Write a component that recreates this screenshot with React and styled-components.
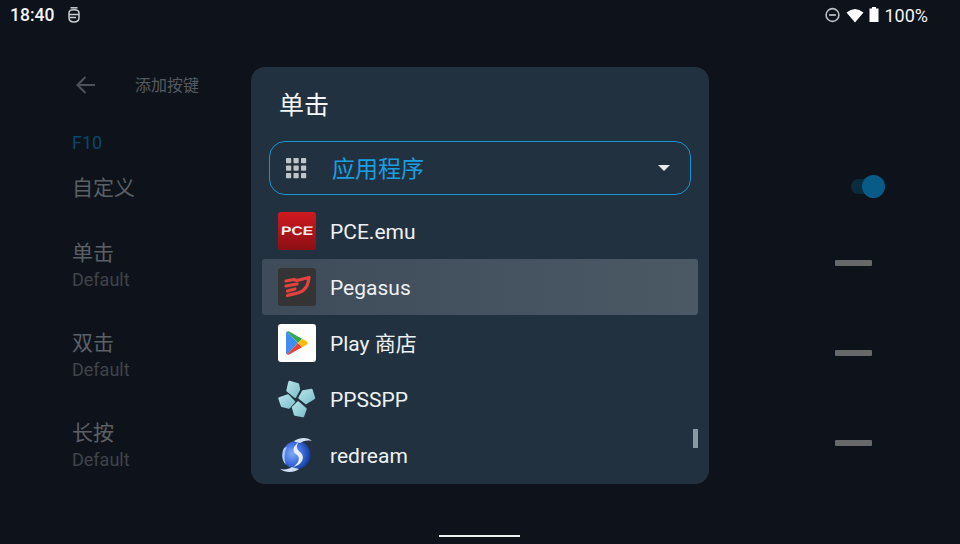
import React from "react";
import styled, { createGlobalStyle } from "styled-components";

const GlobalStyle = createGlobalStyle`
  html, body {
    margin: 0;
    padding: 0;
    background: #0e131b;
  }
  * {
    box-sizing: border-box;
  }
`;

const Screen = styled.div`
  position: relative;
  width: 960px;
  height: 544px;
  overflow: hidden;
  background: #0e131b;
  font-family: Roboto, "Noto Sans CJK SC", sans-serif;
`;

const StatusBar = styled.div`
  height: 30px;
  padding: 0 32px 0 10px;
  display: flex;
  align-items: center;
  color: #f2f4f6;
`;

const Clock = styled.span`
  font-size: 17.5px;
  font-weight: 500;
  width: 58px;
`;

const StatusRight = styled.div`
  margin-left: auto;
  display: flex;
  align-items: center;
  gap: 5px;
`;

const Percent = styled.span`
  font-size: 18px;
`;

const Settings = styled.div`
  padding: 0 75px 0 72px;
`;

const Toolbar = styled.div`
  height: 50px;
  margin-top: 30px;
  padding-left: 3px;
  display: flex;
  align-items: center;
  gap: 40px;
  color: #555a60;
  font-size: 16px;
`;

const ToolbarTitle = styled.span`
  margin-top: -2px;
`;

const Category = styled.div`
  color: #07486b;
  font-size: 18px;
  line-height: 20px;
  margin-top: 23px;
`;

const Row = styled.div`
  height: ${(p) => p.$height}px;
  display: flex;
  align-items: center;
  justify-content: space-between;
`;

const RowText = styled.div`
  display: flex;
  flex-direction: column;
  margin-top: -7px;
`;

const RowTitle = styled.div`
  color: #5b6066;
  font-size: 21px;
  line-height: 28px;
`;

const RowSub = styled.div`
  color: #3f4349;
  font-size: 18px;
  line-height: 20px;
  margin-top: 3px;
`;

const Toggle = styled.div`
  position: relative;
  width: 34px;
  height: 23px;
  margin-top: -4px;
`;

const ToggleTrack = styled.div`
  position: absolute;
  left: 0;
  top: 4px;
  width: 28px;
  height: 15px;
  border-radius: 8px;
  background: #0b2c3e;
`;

const ToggleThumb = styled.div`
  position: absolute;
  right: 0;
  top: 0;
  width: 23px;
  height: 23px;
  border-radius: 50%;
  background: #075b86;
`;

const Dash = styled.div`
  width: 37px;
  height: 6px;
  margin-right: 13px;
  margin-top: -10px;
  background: #676869;
  border-radius: 1px;
`;

const Dialog = styled.div`
  position: absolute;
  left: 251px;
  top: 67px;
  width: 458px;
  height: 417px;
  border-radius: 14px;
  background: #22313f;
  overflow: hidden;
  padding: 0 11px;
`;

const DialogTitle = styled.div`
  color: #f4f6f8;
  font-size: 25px;
  line-height: 36px;
  padding: 21px 0 0 17px;
  height: 74px;
`;

const Select = styled.div`
  height: 54px;
  margin: 0 7px;
  border: 1.5px solid #1a94d0;
  border-radius: 16px;
  display: flex;
  align-items: center;
  padding: 0 20px 0 15px;
  gap: 25px;
  color: #1a9fe0;
  font-size: 23px;
`;

const SelectLabel = styled.span`
  margin-top: -2px;
`;

const Caret = styled.div`
  margin-left: auto;
  width: 0;
  height: 0;
  border-left: 6px solid transparent;
  border-right: 6px solid transparent;
  border-top: 6px solid #e8ebee;
`;

const AppList = styled.div`
  margin-top: 8px;
  position: relative;
`;

const AppRow = styled.div`
  height: 56px;
  padding-left: 16px;
  display: flex;
  align-items: center;
  gap: 14px;
  color: #eef1f3;
  font-size: 21px;
  border-radius: 3px;
  background: ${(p) =>
    p.$selected ? "linear-gradient(90deg, #3e4c5a, #4b5965)" : "transparent"};
`;

const AppName = styled.span`
  line-height: 24px;
  margin-top: 1px;
`;

const Tile = styled.div`
  width: 38px;
  height: 38px;
  flex: none;
  border-radius: 3px;
  display: flex;
  align-items: center;
  justify-content: center;
  background: ${(p) => p.$bg};
`;

const PceMark = styled.span`
  color: #f6eeee;
  font-family: "Liberation Sans", sans-serif;
  font-size: 12.5px;
  font-weight: 700;
  font-style: italic;
  transform: scaleX(1.25) skewX(8deg);
  margin-top: -1px;
`;

const ScrollThumb = styled.div`
  position: absolute;
  right: 0;
  top: 226px;
  width: 5px;
  height: 19px;
  background: #8a98a3;
`;

const NavHandle = styled.div`
  position: absolute;
  left: 439px;
  bottom: 7px;
  width: 81px;
  height: 2px;
  background: #eceef0;
`;

const DataSaverIcon = () => (
  <svg width="17" height="16" viewBox="0 0 16 16">
    <circle cx="8" cy="8" r="6.4" fill="none" stroke="#b9bdc2" strokeWidth="1.6" />
    <rect x="4.6" y="7.1" width="6.8" height="1.8" fill="#b9bdc2" />
  </svg>
);

const WifiIcon = () => (
  <svg width="18" height="15" viewBox="0 0 18 15">
    <path d="M0.5 4.6 Q9 -2.6 17.5 4.6 L9 14.5 Z" fill="#fff" />
  </svg>
);

const BatteryIcon = () => (
  <svg width="10" height="16" viewBox="0 0 10 16">
    <path d="M3 0 H7 V1.5 H9.5 V15 H0.5 V1.5 H3 Z" fill="#fff" />
  </svg>
);

const NotifyIcon = () => (
  <svg width="12" height="16" viewBox="0 0 12 16" fill="none" stroke="#c9ced3" strokeWidth="1.5">
    <path d="M2.5 0.8 H9.5" />
    <path d="M1 6 C1 3.4 3 2.8 6 2.8 C9 2.8 11 3.4 11 6 V10.5 C11 13.6 9 15 6 15 C3 15 1 13.6 1 10.5 Z" />
    <path d="M1 7.4 H11 M1.5 10.6 H8" />
  </svg>
);

const BackArrow = () => (
  <svg width="20" height="20" viewBox="0 0 20 20" fill="none" stroke="#4e535a" strokeWidth="2">
    <path d="M20 10 H3 M10.5 2 L2.5 10 L10.5 18" />
  </svg>
);

const GridIcon = () => (
  <svg width="22" height="22" viewBox="0 0 22 22" fill="#bfc4c8">
    {[1, 8.5, 16].map((y) =>
      [1, 8.5, 16].map((x) => <rect key={`${x}-${y}`} x={x} y={y} width="5.2" height="5.2" rx="0.8" />)
    )}
  </svg>
);

const PegasusIcon = () => (
  <svg width="38" height="38" viewBox="0 0 38 38" fill="none" stroke="#e5413f" strokeWidth="3.2" strokeLinecap="round" strokeLinejoin="round">
    <path d="M8 13 L16 11.5 L19 12.5 C23 11.5 27 10.5 31 9.5 C30.5 15 28.5 20 25 22.5 C21 25.5 15 26 9.5 27.5" />
    <path d="M8 18 L19 16" />
    <path d="M9.5 23 L17 21" />
  </svg>
);

const PlayIcon = () => (
  <svg width="24" height="26" viewBox="0 0 24 26">
    <path d="M2 1.5 L13 13 L2 24.5 C1.2 24 1 23.4 1 22.5 V3.5 C1 2.6 1.2 2 2 1.5 Z" fill="#3f8df3" />
    <path d="M2 1.5 C2.6 1.1 3.4 1.1 4.2 1.6 L17 8.8 L13 13 Z" fill="#35a853" />
    <path d="M2 24.5 C2.6 24.9 3.4 24.9 4.2 24.4 L17 17.2 L13 13 Z" fill="#ea4335" />
    <path d="M17 8.8 L21.8 11.5 C23.2 12.3 23.2 13.7 21.8 14.5 L17 17.2 L13 13 Z" fill="#fbbc04" />
  </svg>
);

const PpssppIcon = () => (
  <svg width="38" height="38" viewBox="0 0 38 38">
    <defs>
      <linearGradient id="psp" x1="0" y1="0" x2="1" y2="1">
        <stop offset="0" stopColor="#b4e2e8" />
        <stop offset="1" stopColor="#7fc0cc" />
      </linearGradient>
    </defs>
    <g fill="url(#psp)" stroke="url(#psp)" strokeWidth="2.4" strokeLinejoin="round">
      <path d="M11.5 2 L20 4.5 L21 9.5 L17.2 16.8 L9.5 10.5 Z" />
      <path d="M33.5 10 L36 18 L28 23 L21.5 17.8 L25 11.5 Z" />
      <path d="M20 22.5 L27.5 29 L25 36 L17 34.5 L15 27.5 Z" />
      <path d="M1.5 18.5 L10 15.5 L16 21.8 L11 27.5 L4 25.8 Z" />
    </g>
  </svg>
);

const RedreamIcon = () => (
  <svg width="38" height="38" viewBox="0 0 38 38">
    <defs>
      <radialGradient id="rd" cx="0.35" cy="0.45" r="0.65">
        <stop offset="0" stopColor="#7fa9f5" />
        <stop offset="0.55" stopColor="#3f6fe0" />
        <stop offset="1" stopColor="#123a9e" />
      </radialGradient>
    </defs>
    <circle cx="18.5" cy="19" r="14" fill="url(#rd)" />
    <path d="M16 5 C22 1 30 1 34 5 C29 4 25 5 22 7 C19 6.5 17.5 6 16 5 Z" fill="#cfe0f4" />
    <path d="M2 33 C7 34 11 33 14 31 C17 32 19 32.5 21 33 C16 37 7 37 2 33 Z" fill="#cfe0f4" />
    <path d="M21 6 C14 11 14 16 19 19 C23 22 20 28 15 31 C24 29 28 21 22 16 C18 13 18 9 21 6 Z" fill="#e4eefc" />
    <path d="M6 12 C3 18 4 25 8 29 C6 23 6 17 9 11 Z" fill="#a9c8f8" />
  </svg>
);

const apps = [
  { name: "PCE.emu", bg: "linear-gradient(180deg, #cf1a20, #8c0f13)", icon: <PceMark>PCE</PceMark> },
  { name: "Pegasus", bg: "#343434", icon: <PegasusIcon />, selected: true },
  { name: "Play 商店", bg: "#ffffff", icon: <PlayIcon /> },
  { name: "PPSSPP", bg: "transparent", icon: <PpssppIcon /> },
  { name: "redream", bg: "transparent", icon: <RedreamIcon /> },
];

const rows = ["单击", "双击", "长按"];

export default function App() {
  return (
    <Screen>
      <GlobalStyle />
      <StatusBar>
        <Clock>18:40</Clock>
        <NotifyIcon />
        <StatusRight>
          <DataSaverIcon />
          <WifiIcon />
          <BatteryIcon />
          <Percent>100%</Percent>
        </StatusRight>
      </StatusBar>

      <Settings>
        <Toolbar>
          <BackArrow />
          <ToolbarTitle>添加按键</ToolbarTitle>
        </Toolbar>
        <Category>F10</Category>
        <Row $height={70}>
          <RowTitle>自定义</RowTitle>
          <Toggle>
            <ToggleTrack />
            <ToggleThumb />
          </Toggle>
        </Row>
        {rows.map((title) => (
          <Row key={title} $height={90}>
            <RowText>
              <RowTitle>{title}</RowTitle>
              <RowSub>Default</RowSub>
            </RowText>
            <Dash />
          </Row>
        ))}
      </Settings>

      <Dialog>
        <DialogTitle>单击</DialogTitle>
        <Select>
          <GridIcon />
          <SelectLabel>应用程序</SelectLabel>
          <Caret />
        </Select>
        <AppList>
          {apps.map((app) => (
            <AppRow key={app.name} $selected={app.selected}>
              <Tile $bg={app.bg}>{app.icon}</Tile>
              <AppName>{app.name}</AppName>
            </AppRow>
          ))}
          <ScrollThumb />
        </AppList>
      </Dialog>

      <NavHandle />
    </Screen>
  );
}
